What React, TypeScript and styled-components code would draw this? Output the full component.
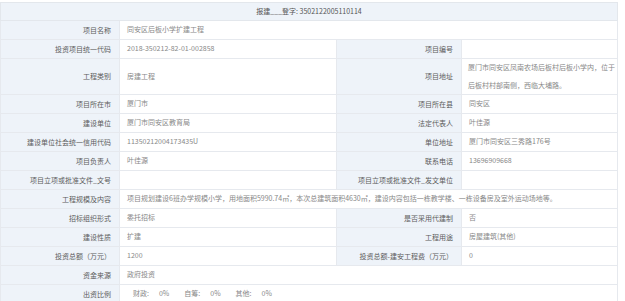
import React from "react";
import styled, { createGlobalStyle } from "styled-components";

const Global = createGlobalStyle`
  html, body { margin: 0; padding: 0; background: #ffffff; }
  body { font-family: "Noto Sans CJK SC", "Noto Sans", sans-serif; }
`;

const Page = styled.div`
  padding: 2px 0 0 0;
  width: 617px;
`;

const Table = styled.table`
  width: 617px;
  border-collapse: collapse;
  table-layout: fixed;
  font-size: 7px;
  border: 1px solid #e3e7ec;
`;

const HeadCell = styled.td`
  background: #eef3f9;
  color: #555;
  text-align: center;
  height: 17px;
  line-height: 17px;
  padding: 0;
  border: 1px solid #e3e7ec;
`;

const Label = styled.td`
  background: #eef3f9;
  color: #5c5c5c;
  text-align: right;
  padding: 0 8px 0 4px;
  height: 18px;
  line-height: 17px;
  border: 1px solid #e6e9ee;
  white-space: nowrap;
  vertical-align: middle;
`;

const Value = styled.td<{ $tight?: boolean }>`
  background: #ffffff;
  color: #888;
  text-align: left;
  padding: ${(p) => (p.$tight ? "0 1px 0 6px" : "0 6px 0 7px")};
  height: 18px;
  line-height: 17.5px;
  border: 1px solid #e6e9ee;
  vertical-align: middle;
`;

const Ratio = styled.span`
  display: inline-block;
  margin-left: 6px;
`;

const Pct = styled.span`
  display: inline-block;
  margin-left: 10px;
  margin-right: 9px;
`;

type Pair = [string, string];

const Row4 = ({ a, b, tight }: { a: Pair; b: Pair; tight?: boolean }) => (
  <tr>
    <Label>{a[0]}</Label>
    <Value>{a[1]}</Value>
    <Label>{b[0]}</Label>
    <Value $tight={tight}>{b[1]}</Value>
  </tr>
);

const Row2 = ({ label, children }: { label: string; children: React.ReactNode }) => (
  <tr>
    <Label>{label}</Label>
    <Value colSpan={3}>{children}</Value>
  </tr>
);

export default function App() {
  return (
    <>
      <Global />
      <Page>
        <Table>
          <colgroup>
            <col style={{ width: 119 }} />
            <col style={{ width: 217 }} />
            <col style={{ width: 125 }} />
            <col style={{ width: 156 }} />
          </colgroup>
          <tbody>
            <tr>
              <HeadCell colSpan={4}>报建___登字: 3502122005110114</HeadCell>
            </tr>
            <Row2 label="项目名称">同安区后板小学扩建工程</Row2>
            <Row4 a={["投资项目统一代码", "2018-350212-82-01-002858"]} b={["项目编号", ""]} />
            <Row4
              a={["工程类别", "房建工程"]}
              b={["项目地址", "厦门市同安区凤南农场后板村后板小学内，位于后板村村部南侧，西临大埔路。"]}
              tight
            />
            <Row4 a={["项目所在市", "厦门市"]} b={["项目所在县", "同安区"]} />
            <Row4 a={["建设单位", "厦门市同安区教育局"]} b={["法定代表人", "叶佳源"]} />
            <Row4 a={["建设单位社会统一信用代码", "11350212004173435U"]} b={["单位地址", "厦门市同安区三秀路176号"]} />
            <Row4 a={["项目负责人", "叶佳源"]} b={["联系电话", "13696909668"]} />
            <Row4 a={["项目立项或批准文件_文号", ""]} b={["项目立项或批准文件_发文单位", ""]} />
            <Row2 label="工程规模及内容">
              项目规划建设6班办学规模小学，用地面积5990.74㎡，本次总建筑面积4630㎡，建设内容包括一栋教学楼、一栋设备房及室外运动场地等。
            </Row2>
            <Row4 a={["招标组织形式", "委托招标"]} b={["是否采用代建制", "否"]} />
            <Row4 a={["建设性质", "扩建"]} b={["工程用途", "房屋建筑(其他)"]} />
            <Row4 a={["投资总额（万元）", "1200"]} b={["投资总额-建安工程费（万元）", "0"]} />
            <Row2 label="资金来源">政府投资</Row2>
            <Row2 label="出资比例">
              <Ratio>财政:</Ratio>
              <Pct>0%</Pct>
              <Ratio>自筹:</Ratio>
              <Pct>0%</Pct>
              <Ratio>其他:</Ratio>
              <Pct>0%</Pct>
            </Row2>
          </tbody>
        </Table>
      </Page>
    </>
  );
}
